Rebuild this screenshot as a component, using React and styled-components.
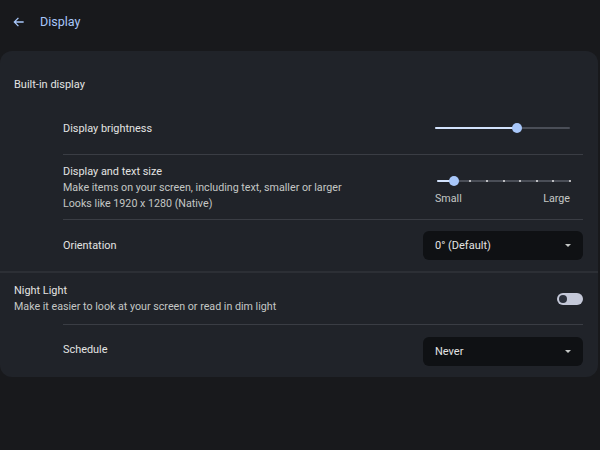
import styled, { createGlobalStyle } from "styled-components";

const Global = createGlobalStyle`
  html, body {
    margin: 0;
    background: #18191c;
    font-family: Roboto, "Noto Sans", sans-serif;
    color: #e3e3e3;
  }
`;

const Page = styled.div`
  width: 600px;
  height: 450px;
  overflow: hidden;
`;

const Header = styled.div`
  height: 51px;
  display: flex;
  align-items: center;
  padding: 0 0 8px 12px;
  box-sizing: border-box;
  gap: 14px;
  color: #a8c7fa;
  font-size: 12.5px;
`;

const Card = styled.div`
  width: 598px;
  background: #202329;
  border-radius: 12px;
  padding-bottom: 3px;
  overflow: hidden;
`;

const Section = styled.div`
  border-top: ${(p) => (p.$divided ? "2px solid #2c2f35" : "none")};
`;

const SectionTitle = styled.div`
  font-size: 11px;
  padding: 27px 14px 11px;
`;

const Row = styled.div`
  display: flex;
  align-items: center;
  justify-content: space-between;
  margin-left: ${(p) => (p.$nested ? "63px" : "14px")};
  margin-right: 15px;
  min-height: ${(p) => p.$h || 52}px;
  border-top: ${(p) => (p.$line ? "1px solid #3a3d44" : "none")};
  box-sizing: border-box;
`;

const Text = styled.div`
  display: flex;
  flex-direction: column;
  gap: 3px;
`;

const Label = styled.div`
  font-size: 10.9px;
  color: #e3e3e3;
`;

const Sub = styled.div`
  font-size: 10.7px;
  color: #c4c7c5;
`;

const Slider = styled.div`
  position: relative;
  width: 135px;
  height: 10px;
  margin-right: 13px;
`;

const Track = styled.div`
  position: absolute;
  left: 0;
  right: 0;
  top: 4px;
  height: 2px;
  background: #4a4e57;
  border-radius: 1px;
`;

const Fill = styled.div`
  position: absolute;
  left: 0;
  top: 4px;
  height: 2px;
  background: #d3e3fd;
  border-radius: 1px;
`;

const Thumb = styled.div`
  position: absolute;
  top: 0;
  width: 10px;
  height: 10px;
  margin-left: -5px;
  border-radius: 50%;
  background: #a8c7fa;
`;

const Tick = styled.div`
  position: absolute;
  top: 4px;
  width: 2px;
  height: 2px;
  margin-left: -1px;
  border-radius: 50%;
  background: #e3e3e3;
`;

const SizeControl = styled.div`
  display: flex;
  flex-direction: column;
  gap: 6px;
  width: 135px;
  margin-right: 13px;
  margin-top: 6px;
`;

const Ends = styled.div`
  display: flex;
  justify-content: space-between;
  font-size: 10.7px;
  color: #c4c7c5;
`;

const Select = styled.div`
  width: 160px;
  height: 29px;
  margin-top: ${(p) => p.$shift || 0}px;
  background: #0f1114;
  border-radius: 6px;
  display: flex;
  align-items: center;
  justify-content: space-between;
  padding: 0 12px;
  box-sizing: border-box;
  font-size: 11px;
  color: #e3e3e3;
`;

const Caret = styled.div`
  width: 0;
  height: 0;
  border-left: 3px solid transparent;
  border-right: 3px solid transparent;
  border-top: 3px solid #c4c7c5;
`;

const Toggle = styled.div`
  width: 26px;
  height: 12px;
  border-radius: 6px;
  background: #c4c8d8;
  display: flex;
  align-items: center;
  padding: 0 2px;
  box-sizing: border-box;
  &::after {
    content: "";
    width: 8px;
    height: 8px;
    border-radius: 50%;
    background: #2b303b;
  }
`;

const Back = () => (
  <svg width="14" height="14" viewBox="0 0 24 24" fill="none">
    <path d="M20 12H5M11 5l-7 7 7 7" stroke="#a8c7fa" strokeWidth="2.2" />
  </svg>
);

const BrightnessSlider = ({ value }) => (
  <Slider>
    <Track />
    <Fill style={{ width: `${value}%` }} />
    <Thumb style={{ left: `${value}%` }} />
  </Slider>
);

const SizeSlider = ({ steps, index }) => {
  const pct = (i) => (i / (steps - 1)) * 100;
  return (
    <SizeControl>
      <Slider style={{ width: 133, marginLeft: 2, marginRight: 0 }}>
        <Track />
        <Fill style={{ width: `${pct(index)}%` }} />
        {Array.from({ length: steps }, (_, i) =>
          i > index ? <Tick key={i} style={{ left: `${pct(i)}%` }} /> : null
        )}
        <Thumb style={{ left: `${pct(index)}%` }} />
      </Slider>
      <Ends>
        <span>Small</span>
        <span>Large</span>
      </Ends>
    </SizeControl>
  );
};

export default function App() {
  return (
    <Page>
      <Global />
      <Header>
        <Back />
        <span>Display</span>
      </Header>
      <Card>
        <Section>
          <SectionTitle>Built-in display</SectionTitle>
          <Row $nested $h={52}>
            <Label>Display brightness</Label>
            <BrightnessSlider value={61} />
          </Row>
          <Row $nested $line $h={65}>
            <Text>
              <Label>Display and text size</Label>
              <Sub>Make items on your screen, including text, smaller or larger</Sub>
              <Sub>Looks like 1920 x 1280 (Native)</Sub>
            </Text>
            <SizeSlider steps={9} index={1} />
          </Row>
          <Row $nested $line $h={52}>
            <Label>Orientation</Label>
            <Select>
              <span>0° (Default)</span>
              <Caret />
            </Select>
          </Row>
        </Section>
        <Section $divided>
          <Row $h={51}>
            <Text>
              <Label>Night Light</Label>
              <Sub>Make it easier to look at your screen or read in dim light</Sub>
            </Text>
            <Toggle />
          </Row>
          <Row $nested $line $h={50}>
            <Label>Schedule</Label>
            <Select $shift={4}>
              <span>Never</span>
              <Caret />
            </Select>
          </Row>
        </Section>
      </Card>
    </Page>
  );
}
